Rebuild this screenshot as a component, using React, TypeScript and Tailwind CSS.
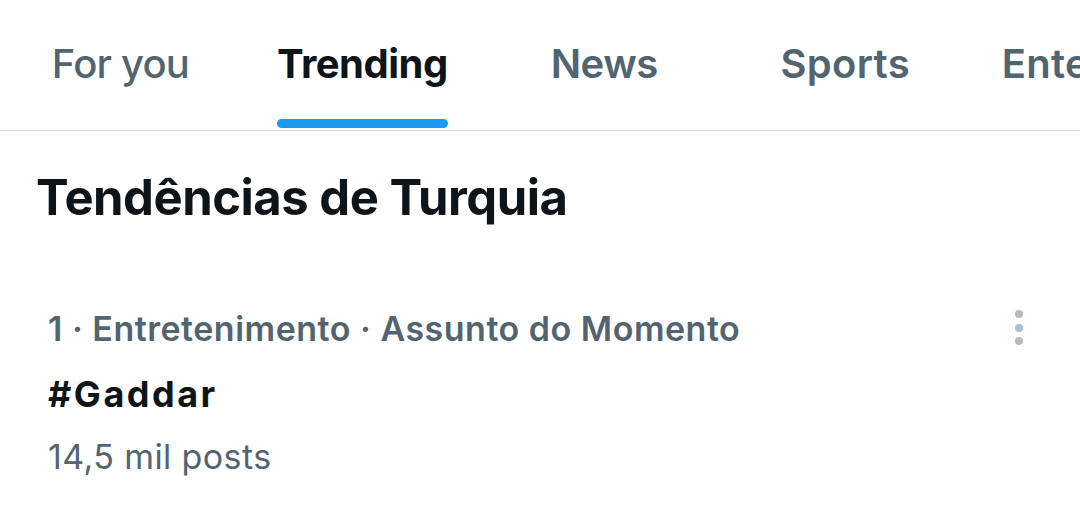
import React from "react";

const tabs = ["For you", "Trending", "News", "Sports", "Entertainment"];

const tabStyle = [
  "font-medium text-[#536471] tracking-[-0.8px]",
  "font-bold text-[#0f1419] tracking-[-0.5px]",
  "font-semibold text-[#536471] tracking-[-0.5px]",
  "font-semibold text-[#536471] tracking-[0.3px]",
  "font-semibold text-[#536471] tracking-[0.3px]",
];

export default function App() {
  return (
    <div className="w-[1080px] h-[528px] bg-white overflow-hidden" style={{ fontFamily: "Inter, 'Noto Sans', sans-serif" }}>
      <div className="flex h-[131px] border-b border-[#cfd9de] overflow-hidden">
        {tabs.map((t, i) => (
          <div key={t} className="min-w-[241px] px-[36px] shrink-0 flex flex-col items-center">
            <div className="relative h-full flex flex-col items-center justify-center pb-[2px]">
              <span className={"text-[40px] leading-none whitespace-nowrap " + tabStyle[i]}>{t}</span>
              {i === 1 && <div className="absolute bottom-[2px] left-0 right-0 h-[9px] rounded-full bg-[#1d9bf0]" />}
            </div>
          </div>
        ))}
      </div>
      <div className="pl-[36px] pt-[42px] text-[49px] font-bold text-[#0f1419] leading-none tracking-[-0.5px]">
        Tendências de Turquia
      </div>
      <div className="flex justify-between pl-[48px] pr-[57px] pt-[90px]">
        <div className="flex flex-col">
          <div className="text-[34px] font-semibold text-[#536471] leading-none tracking-[0.5px] whitespace-nowrap">
            1 · Entretenimento · Assunto do Momento
          </div>
          <div className="text-[36px] font-bold text-[#0f1419] leading-none mt-[30px] tracking-[2.5px]">#Gaddar</div>
          <div className="text-[34px] text-[#536471] leading-none mt-[28px] tracking-[0.4px]">14,5 mil posts</div>
        </div>
        <div className="flex flex-col gap-[5.5px] -mt-[2px]">
          <div className="w-[8px] h-[8px] rounded-full bg-[#b0bcc4]" />
          <div className="w-[8px] h-[8px] rounded-full bg-[#b0bcc4]" />
          <div className="w-[8px] h-[8px] rounded-full bg-[#b0bcc4]" />
        </div>
      </div>
    </div>
  );
}
